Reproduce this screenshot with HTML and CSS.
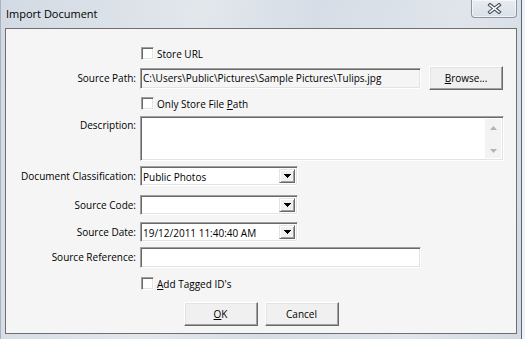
FILE: index.html
```html
<!DOCTYPE html>
<html lang="en">
<head>
    <meta charset="UTF-8">
    <title>Import Document</title>
    <link rel="stylesheet" href="styles.css">
</head>
<body>
    <div class="window">
        <!-- Title bar -->
        <div class="titlebar">
            <span class="title">Import Document</span>
            <button class="close" type="button">
                <svg width="15" height="11" viewBox="0 0 15 11">
                    <path d="M3 2 L12 9 M12 2 L3 9" stroke="#4a4f57" stroke-width="3.6" stroke-linecap="square" fill="none"/>
                    <path d="M3 2 L12 9 M12 2 L3 9" stroke="#fff" stroke-width="1.5" stroke-linecap="square" fill="none"/>
                </svg>
            </button>
        </div>

        <!-- Dialog body -->
        <div class="client">
            <form class="form">
                <div class="row row-check">
                    <span class="label"></span>
                    <label class="check"><span class="box"></span><span>Store URL</span></label>
                </div>

                <div class="row row-path">
                    <span class="label">Source Path:</span>
                    <div class="input readonly wide">C:\Users\Public\Pictures\Sample Pictures\Tulips.jpg</div>
                    <button class="btn browse" type="button"><u>B</u>rowse...</button>
                </div>

                <div class="row row-check gap-7">
                    <span class="label"></span>
                    <label class="check"><span class="box"></span><span>Only Store File <u>P</u>ath</span></label>
                </div>

                <div class="row row-desc">
                    <span class="label label-top">Description:</span>
                    <div class="input memo">
                        <div class="scroll">
                            <svg width="7" height="4" viewBox="0 0 7 4"><polygon points="3.5,0 7,4 0,4" fill="#b4b4b4"/></svg>
                            <svg width="7" height="4" viewBox="0 0 7 4"><polygon points="0,0 7,0 3.5,4" fill="#b4b4b4"/></svg>
                        </div>
                    </div>
                </div>

                <div class="row row-field gap-5">
                    <span class="label">Document Classification:</span>
                    <div class="input combo"><span class="value">Public Photos</span><span class="drop"><svg width="7" height="4" viewBox="0 0 7 4"><polygon points="0,0 7,0 3.5,4" fill="#000"/></svg></span></div>
                </div>

                <div class="row row-field gap-9">
                    <span class="label">Source Code:</span>
                    <div class="input combo"><span class="value"></span><span class="drop"><svg width="7" height="4" viewBox="0 0 7 4"><polygon points="0,0 7,0 3.5,4" fill="#000"/></svg></span></div>
                </div>

                <div class="row row-field gap-7">
                    <span class="label">Source Date:</span>
                    <div class="input combo"><span class="value">19/12/2011 11:40:40 AM</span><span class="drop"><svg width="7" height="4" viewBox="0 0 7 4"><polygon points="0,0 7,0 3.5,4" fill="#000"/></svg></span></div>
                </div>

                <div class="row row-field gap-5">
                    <span class="label">Source Reference:</span>
                    <div class="input wide"></div>
                </div>

                <div class="row row-check gap-10">
                    <span class="label"></span>
                    <label class="check"><span class="box"></span><span><u>A</u>dd Tagged ID's</span></label>
                </div>

                <div class="actions">
                    <button class="btn" type="button"><u>O</u>K</button>
                    <button class="btn" type="button">Cancel</button>
                </div>
            </form>
        </div>
    </div>
</body>
</html>
```

FILE: styles.css
```css
/* Basic reset */
* {
    margin: 0;
    padding: 0;
    box-sizing: border-box;
}

body {
    font-family: "Open Sans", "Noto Sans", sans-serif;
    font-size: 10px;
    color: #000;
    background-color: #eef2f6;
}

/* Window frame */
.window {
    width: 522px;
    height: 339px;
    background: linear-gradient(100deg, #d3dae3 0%, #e2e7ec 35%, #d6dde6 55%, #e0e5eb 80%, #d3dae3 100%);
    border-left: 1px solid #a9b3be;
    border-right: 1px solid #5d6670;
    padding: 0 4px 0 4px;
}

.titlebar {
    height: 28px;
    display: flex;
    align-items: flex-start;
}

.title {
    font-size: 11px;
    line-height: 28px;
    padding-left: 1px;
}

.close {
    margin-left: auto;
    width: 46px;
    height: 18px;
    border: 1px solid #8a96a5;
    border-top: none;
    border-radius: 0 0 4px 4px;
    background: linear-gradient(#e8ecf1, #d9e0e8);
    box-shadow: inset 0 0 0 1px rgba(255, 255, 255, 0.6);
    display: flex;
    align-items: center;
    justify-content: center;
    padding-bottom: 1px;
}

.close svg {
    display: block;
}

/* Client area */
.client {
    width: 512px;
    height: 306px;
    background-color: #f5f5f5;
    border: 1px solid #6f6f6f;
}

.form {
    padding-top: 18px;
}

.row {
    display: flex;
    align-items: center;
}

.label {
    width: 130px;
    margin-right: 4px;
    text-align: right;
    white-space: nowrap;
}

.label-top {
    align-self: flex-start;
    padding-top: 3px;
    line-height: 13px;
}

.row-check { height: 13px; }
.row-path { height: 24px; margin-top: 6px; }
.row-desc { height: 45px; margin-top: 6px; align-items: flex-start; }
.row-field { height: 20px; }

.gap-5 { margin-top: 5px; }
.gap-7 { margin-top: 7px; }
.gap-9 { margin-top: 9px; }
.gap-10 { margin-top: 10px; }

/* Check boxes */
.check {
    display: flex;
    align-items: center;
    margin-left: 1px;
    white-space: pre;
}

.box {
    width: 13px;
    height: 13px;
    margin-right: 3px;
    background-color: #fff;
    border: 1px solid;
    border-color: #a0a0a0 #fff #fff #a0a0a0;
    box-shadow: inset 1px 1px #696969, inset -1px -1px #e3e3e3;
}

/* Sunken fields */
.input {
    height: 21px;
    background-color: #fff;
    border: 1px solid;
    border-color: #a0a0a0 #fff #fff #a0a0a0;
    box-shadow: inset 1px 1px #696969, inset -1px -1px #e3e3e3;
    padding: 0 2px;
    line-height: 19px;
    white-space: nowrap;
    overflow: hidden;
}

.readonly {
    background-color: #f5f5f5;
}

.wide {
    width: 281px;
}

.memo {
    width: 364px;
    height: 45px;
    padding: 2px;
    display: flex;
    justify-content: flex-end;
}

.scroll {
    width: 16px;
    height: 100%;
    background-color: #f3f3f3;
    display: flex;
    flex-direction: column;
    align-items: center;
    justify-content: space-between;
    padding: 7px 0 5px;
}

.scroll svg {
    display: block;
}

.combo {
    width: 158px;
    height: 20px;
    display: flex;
    align-items: stretch;
    padding: 2px;
    line-height: 16px;
}

.combo .value {
    flex: 1;
}

.drop {
    width: 16px;
    background-color: #f0f0f0;
    border: 1px solid;
    border-color: #e3e3e3 #696969 #696969 #e3e3e3;
    box-shadow: inset 1px 1px #fff, inset -1px -1px #a0a0a0;
    display: flex;
    align-items: center;
    justify-content: center;
}

.drop svg {
    display: block;
    shape-rendering: crispEdges;
}

/* Push buttons */
.btn {
    width: 74px;
    height: 24px;
    font-family: inherit;
    font-size: 10px;
    color: #000;
    background-color: #f0f0f0;
    border: 1px solid;
    border-color: #fff #696969 #696969 #fff;
    box-shadow: inset -1px -1px #a0a0a0, inset 1px 1px #e3e3e3;
}

.browse {
    margin-left: 8px;
}

.actions {
    display: flex;
    justify-content: center;
    gap: 7px;
    margin-top: 12px;
}
```
